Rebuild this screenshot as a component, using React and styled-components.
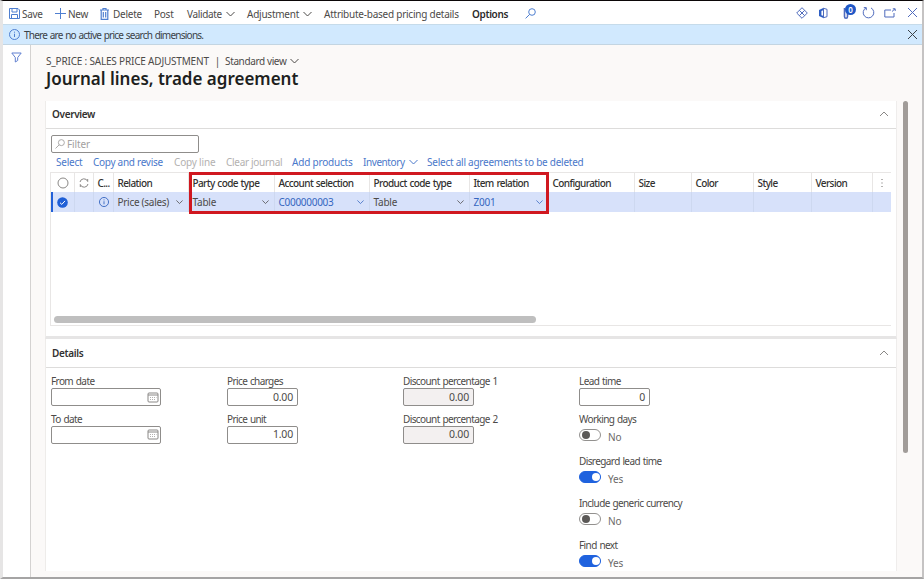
import React from "react";
import styled, { createGlobalStyle } from "styled-components";

const Global = createGlobalStyle`
  * { box-sizing: border-box; }
  html, body { margin: 0; padding: 0; overflow: hidden; }
  body { font-family: "Noto Sans", "Open Sans", sans-serif; font-size: 10px; color: #4c4a48; background: #fff; }
`;

const Window = styled.div`
  width: 924px;
  height: 579px;
  display: flex;
  flex-direction: column;
  background: #fff;
  border-top: 1px solid #0b0708;
  border-bottom: 2px solid #a5a4a4;
  border-left: 3px solid #e6e5e5;
  border-right: 2px solid #c5c3c3;
  overflow: hidden;
`;

const Toolbar = styled.header`
  height: 23px;
  flex: none;
  display: flex;
  align-items: center;
  padding-left: 6px;
  padding-top: 2px;
`;

const Command = styled.div`
  flex: none;
  width: ${(p) => p.$w}px;
  display: flex;
  align-items: center;
  gap: ${(p) => p.$gap ?? 4}px;
  white-space: nowrap;
  line-height: 16px;
  font-weight: ${(p) => (p.$bold ? 600 : 400)};
  color: ${(p) => (p.$bold ? "#2b2a29" : "#4c4a48")};
`;

const Text = styled.span`
  white-space: nowrap;
  letter-spacing: ${(p) => p.$ls ?? -0.24}px;
`;

const TightText = styled.span`
  white-space: nowrap;
  letter-spacing: ${(p) => p.$ls ?? -0.6}px;
  word-spacing: 0.7px;
`;

const Spacer = styled.div`
  flex: 1;
`;

const Tools = styled.div`
  flex: none;
  display: grid;
  grid-template-columns: 22px 25px 19px 22px 23px 14px;
  align-items: center;
  color: #4f6bbd;
  margin: -2px 1px 0 0;
`;

const BadgeHost = styled.span`
  position: relative;
  display: inline-flex;
`;

const Badge = styled.span`
  position: absolute;
  left: 2px;
  top: -3px;
  width: 11px;
  height: 11px;
  border-radius: 50%;
  background: #1f57c6;
  color: #fff;
  font-size: 8px;
  font-weight: 600;
  line-height: 11px;
  text-align: center;
`;

const Notice = styled.div`
  height: 21px;
  flex: none;
  display: flex;
  align-items: center;
  gap: 4px;
  padding: 0 4px 0 6px;
  background: #d1e9fe;
  border-top: 1px solid #c6dbea;
  border-bottom: 1px solid #c3d5e2;
  color: #3b4248;
`;

const Body = styled.div`
  flex: 1;
  min-height: 0;
  display: flex;
`;

const Side = styled.aside`
  width: 28px;
  flex: none;
  background: #fff;
  border-right: 1px solid #d4d2d1;
  padding: 7px 0 0 8px;
  color: #5f7fd0;
`;

const Main = styled.main`
  flex: 1;
  min-width: 0;
  background: #fbf9f8;
  display: flex;
  flex-direction: column;
  padding-left: 14px;
`;

const Crumb = styled.div`
  height: 16px;
  margin-top: 8px;
  display: flex;
  align-items: center;
  gap: 6px;
  padding-left: 1px;
  color: #4c4a48;
`;

const View = styled.span`
  display: inline-flex;
  align-items: center;
  gap: 4px;
  margin-left: -1px;
`;

const Title = styled.h1`
  margin: 0;
  height: 32px;
  padding-left: 1px;
  font-size: 17px;
  line-height: 19px;
  font-weight: 600;
  color: #201f1e;
  white-space: nowrap;
`;

const Scroller = styled.div`
  display: flex;
  align-items: flex-start;
  gap: 6px;
`;

const Cards = styled.div`
  width: 852px;
  flex: none;
`;

const ScrollThumb = styled.div`
  width: 5px;
  height: 352px;
  border-radius: 3px;
  background: #a19c99;
`;

const Card = styled.section`
  background: #fff;
  border-left: 1px solid #eeecea;
  border-right: 1px solid #efedec;
  height: ${(p) => p.$h}px;
  padding: 0 5px;
  border-bottom: ${(p) => (p.$divided ? "3px solid #e6e5e5" : "0")};
`;

const CardHead = styled.div`
  height: ${(p) => p.$h}px;
  margin: 0 -5px;
  padding: 0 7px ${(p) => p.$pb}px 6px;
  display: flex;
  align-items: center;
  justify-content: space-between;
  border-bottom: 1px solid #dddcdb;
  font-weight: 600;
  color: #323130;
  svg { color: #8a8886; }
`;

const Filter = styled.div`
  width: 148px;
  height: 18px;
  margin-top: 6px;
  border: 1px solid #8f8d8b;
  border-radius: 2px;
  display: flex;
  align-items: center;
  gap: 2px;
  padding-left: 3px;
  color: #a3a1a0;
`;

const Actions = styled.nav`
  height: 19px;
  display: flex;
  align-items: center;
  padding: 0 0 2px 5px;
`;

const Action = styled.div`
  flex: none;
  width: ${(p) => p.$w}px;
  display: flex;
  align-items: center;
  gap: 4px;
  line-height: 16px;
  white-space: nowrap;
  color: ${(p) => (p.$off ? "#b3b1b0" : "#4a78ca")};
`;

const Grid = styled.div`
  position: relative;
  height: 154px;
  width: 841px;
  margin-left: -1px;
  border: 1px solid #e8e6e5;
  border-right: 0;
  display: flex;
  flex-direction: column;
`;

const Row = styled.div`
  height: ${(p) => (p.$selected ? 20 : 19)}px;
  display: grid;
  grid-template-columns: 24px 19px 20px 75px 86px 95px 100px 79px 86px 57px 62px 58px 61px 18px;
  background: ${(p) => (p.$selected ? "#d7e1fa" : "#fff")};
`;

const Cell = styled.div`
  display: flex;
  align-items: center;
  justify-content: ${(p) => (p.$center ? "center" : "space-between")};
  padding: ${(p) => (p.$center ? "0" : "0 5px 0 3.5px")};
  border-right: 1px solid ${(p) => (p.$head ? "#e8e6e5" : "#cdd8f0")};
  font-weight: ${(p) => (p.$head ? 500 : 400)};
  color: ${(p) => (p.$head ? "#323130" : p.$link ? "#3566c0" : "#4c4a48")};
  white-space: nowrap;
  overflow: hidden;
  box-shadow: ${(p) => (p.$mark ? "inset 2px 0 0 #2160d8" : "none")};
  &:last-child { border-right: 0; }
`;

const Highlight = styled.div`
  position: absolute;
  left: 138px;
  top: -1px;
  width: 360px;
  height: 42px;
  border: 3px solid #d01820;
`;

const HScroll = styled.div`
  width: 482px;
  height: 7px;
  margin: auto 0 2px 3px;
  border-radius: 4px;
  background: #bfbfbf;
`;

const Form = styled.div`
  display: grid;
  grid-template-columns: 176px 176px 176px 1fr;
  padding-top: 7px;
`;

const Field = styled.div`
  height: ${(p) => (p.$toggle ? 42 : 37.5)}px;
  line-height: 13px;
`;

const Label = styled.div`
  height: 13px;
  white-space: nowrap;
  letter-spacing: -0.6px;
  word-spacing: 0.7px;
`;

const Input = styled.div`
  width: ${(p) => (p.$wide ? 110 : 71)}px;
  height: 18px;
  border: 1px solid #8f8d8b;
  border-radius: 2px;
  background: ${(p) => (p.$off ? "#f3f0f0" : "#fff")};
  display: flex;
  align-items: center;
  justify-content: flex-end;
  padding-right: ${(p) => (p.$wide ? 1 : 4)}px;
  font-size: 10.5px;
  letter-spacing: -0.2px;
`;

const ToggleRow = styled.div`
  display: flex;
  gap: 7px;
  height: 22px;
  padding-top: 3px;
`;

const Switch = styled.div`
  width: 22px;
  height: 12px;
  border-radius: 6px;
  border: 1px solid ${(p) => (p.$on ? "#1f62de" : "#93918f")};
  background: ${(p) => (p.$on ? "#1f62de" : "#fff")};
  display: flex;
  align-items: center;
  justify-content: ${(p) => (p.$on ? "flex-end" : "flex-start")};
  padding: 0 ${(p) => (p.$on ? 0 : 2)}px;
`;

const Knob = styled.div`
  width: 8px;
  height: 8px;
  border-radius: 50%;
  background: ${(p) => (p.$on ? "#fff" : "#5b5957")};
`;

const ToggleText = styled.span`
  padding-top: 2px;
  letter-spacing: -0.2px;
  color: #6b6967;
`;

const Blue = styled.span`
  display: inline-flex;
  color: #4f7fd0;
`;

const Svg = ({ w = 11, h = w, vb = `0 0 ${w} ${h}`, children }) => (
  <svg width={w} height={h} viewBox={vb} fill="none" stroke="currentColor" strokeWidth="1">
    {children}
  </svg>
);
const Chevron = ({ w = 9, up }) => (
  <Svg w={w} h={6} vb="0 0 9 6"><path d={up ? "M.5 5 4.5 1 8.5 5" : "M.5 1 4.5 5 8.5 1"} /></Svg>
);
const Close = () => <Svg w={11}><path d="M1 1 10 10M10 1 1 10" /></Svg>;
const Info = ({ w = 11 }) => (
  <Svg w={w} vb="0 0 11 11"><circle cx="5.5" cy="5.5" r="5" /><path d="M5.5 4.7V8M5.5 2.7V3.7" /></Svg>
);
const Search = ({ w = 11 }) => (
  <Svg w={w} vb="0 0 11 11"><circle cx="7" cy="4" r="3.3" /><path d="M4.6 6.4.6 10.4" /></Svg>
);
const Calendar = () => (
  <Svg w={12} h={11}>
    <rect x="1" y="1" width="10" height="9" rx="1" stroke="#8a8886" />
    <path d="M1 3H11" stroke="#8a8886" />
    <path d="M3 5.5H9.5M3 7.5H9" stroke="#b3b1b0" strokeDasharray="1 1" />
  </Svg>
);
const SaveIcon = () => (
  <Blue><Svg w={11}><path d="M.5.5H9L10.5 2V10.5H.5ZM3 .5V4H8V.5M2.5 10.5V6.5H8.5V10.5" /></Svg></Blue>
);
const TrashIcon = () => (
  <Blue><Svg w={9} h={12}><path d="M0 2H9M3 2V.5H6V2M1.2 2V11.3H7.8V2M3.3 4V9.5M5.7 4V9.5" strokeWidth="1.2" /></Svg></Blue>
);

const columns = ["Party code type", "Account selection", "Product code type", "Item relation", "Configuration", "Size", "Color", "Style", "Version"];

const NumberField = ({ label, value, off }) => (
  <Field><Label>{label}</Label><Input $off={off}>{value}</Input></Field>
);
const DateField = ({ label }) => (
  <Field><Label>{label}</Label><Input $wide><Calendar /></Input></Field>
);
const Toggle = ({ label, on }) => (
  <Field $toggle>
    <Label>{label}</Label>
    <ToggleRow><Switch $on={on}><Knob $on={on} /></Switch><ToggleText>{on ? "Yes" : "No"}</ToggleText></ToggleRow>
  </Field>
);

export default function App() {
  return (
    <Window>
      <Global />
      <Toolbar>
        <Command $w={46} $gap={2}><SaveIcon /><Text $ls={-0.35}>Save</Text></Command>
        <Command $w={45} $gap={2}>
          <Blue><Svg w={11}><path d="M5.5 0V11M0 5.5H11" /></Svg></Blue><Text>New</Text>
        </Command>
        <Command $w={54} $gap={4}><TrashIcon /><Text>Delete</Text></Command>
        <Command $w={33}><Text>Post</Text></Command>
        <Command $w={60}><Text $ls={-0.35}>Validate</Text><Chevron /></Command>
        <Command $w={77}><Text>Adjustment</Text><Chevron /></Command>
        <Command $w={148}><Text>Attribute-based pricing details</Text></Command>
        <Command $w={53} $bold><Text $ls={-0.35}>Options</Text></Command>
        <Blue><Search /></Blue>
        <Spacer />
        <Tools>
          <Svg w={12}><path d="M6 .7 11.3 6 6 11.3.7 6ZM3.3 3.3 8.7 8.7M8.7 3.3 3.3 8.7" strokeLinejoin="round" /></Svg>
          <Svg w={10} h={12}>
            <path d="M5.8.8 1 3V9L5.8 11.2V9L3.4 8.2V3.9L5.8 3Z" fill="#2f5fc4" stroke="none" />
            <path d="M5.5 1.3 9 2.3V9.7L5.5 10.7Z" />
          </Svg>
          <BadgeHost>
            <Svg w={10} h={12}><path d="M1.5 1V9.5Q1.5 11.2 3 11.2 4.5 11.2 4.5 9.5V4" strokeWidth="1.6" /></Svg>
            <Badge>0</Badge>
          </BadgeHost>
          <Svg w={13}><path d="M4 1.9A5.3 5.3 0 1 0 9 1.9M4.3 4.2V1.6H1.8" /></Svg>
          <Svg w={12} h={10}><path d="M7 2H.8V9H10V5M8 3.5 11 .8M8.8.8H11.2V3" /></Svg>
          <Close />
        </Tools>
      </Toolbar>
      <Notice>
        <Blue><Info /></Blue>
        <TightText $ls={-0.76}>There are no active price search dimensions.</TightText>
        <Spacer />
        <Close />
      </Notice>
      <Body>
        <Side><Svg w={11}><path d="M.8 1H10.2L6.7 5.5V8.5L4.3 10V5.5Z" /></Svg></Side>
        <Main>
          <Crumb>
            <Text $ls={-0.19}>S_PRICE : SALES PRICE ADJUSTMENT</Text><Text>|</Text>
            <View><Text $ls={-0.38}>Standard view</Text><Chevron /></View>
          </Crumb>
          <Title>Journal lines, trade agreement</Title>
          <Scroller>
            <Cards>
              <Card $h={238} $divided>
                <CardHead $h={28} $pb={2}><Text $ls={-0.35}>Overview</Text><Chevron up w={10} /></CardHead>
                <Filter><Search w={10} /><Text $ls={-0.1}>Filter</Text></Filter>
                <Actions>
                  <Action $w={37}><Text>Select</Text></Action>
                  <Action $w={81}><Text $ls={-0.28}>Copy and revise</Text></Action>
                  <Action $w={52} $off><Text $ls={-0.18}>Copy line</Text></Action>
                  <Action $w={66} $off><Text $ls={-0.3}>Clear journal</Text></Action>
                  <Action $w={71}><Text $ls={-0.2}>Add products</Text></Action>
                  <Action $w={64}><Text $ls={-0.42}>Inventory</Text><Chevron /></Action>
                  <Action $w={160}><Text>Select all agreements to be deleted</Text></Action>
                </Actions>
                <Grid>
                  <Row>
                    <Cell $head $center><Svg w={12}><circle cx="6" cy="6" r="5" stroke="#8a8886" /></Svg></Cell>
                    <Cell $head $center><Svg w={10}><path d="M1 4A4 4 0 0 1 8.7 3.5V1M9 6A4 4 0 0 1 1.3 6.5V9" stroke="#8a8886" /></Svg></Cell>
                    <Cell $head><TightText>C...</TightText></Cell>
                    <Cell $head><TightText>Relation</TightText></Cell>
                    {columns.map((c) => <Cell $head key={c}><TightText>{c}</TightText></Cell>)}
                    <Cell $head $center><Svg w={2} h={10}><path d="M1 1V9" stroke="#6b6967" strokeDasharray="1 2.5" /></Svg></Cell>
                  </Row>
                  <Row $selected>
                    <Cell $center $mark><Svg w={11}><circle cx="5.5" cy="5.5" r="5.3" fill="#1f5fd6" stroke="none" /><path d="M3 5.7 4.8 7.4 8 3.9" stroke="#fff" /></Svg></Cell>
                    <Cell />
                    <Cell $center $link><Info w={10} /></Cell>
                    <Cell><Text $ls={-0.28}>Price (sales)</Text><Chevron w={7} /></Cell>
                    <Cell><Text>Table</Text><Chevron w={7} /></Cell>
                    <Cell $link><Text $ls={-0.28}>C000000003</Text><Chevron w={7} /></Cell>
                    <Cell><Text>Table</Text><Chevron w={7} /></Cell>
                    <Cell $link><Text>Z001</Text><Chevron w={7} /></Cell>
                    <Cell /><Cell /><Cell /><Cell /><Cell /><Cell />
                  </Row>
                  <HScroll />
                  <Highlight />
                </Grid>
              </Card>
              <Card $h={232}>
                <CardHead $h={29} $pb={0}><Text $ls={-0.35}>Details</Text><Chevron up w={10} /></CardHead>
                <Form>
                  <div><DateField label="From date" /><DateField label="To date" /></div>
                  <div><NumberField label="Price charges" value="0.00" /><NumberField label="Price unit" value="1.00" /></div>
                  <div><NumberField off label="Discount percentage 1" value="0.00" /><NumberField off label="Discount percentage 2" value="0.00" /></div>
                  <div>
                    <NumberField label="Lead time" value="0" />
                    <Toggle label="Working days" />
                    <Toggle on label="Disregard lead time" />
                    <Toggle label="Include generic currency" />
                    <Toggle on label="Find next" />
                  </div>
                </Form>
              </Card>
            </Cards>
            <ScrollThumb />
          </Scroller>
        </Main>
      </Body>
    </Window>
  );
}
